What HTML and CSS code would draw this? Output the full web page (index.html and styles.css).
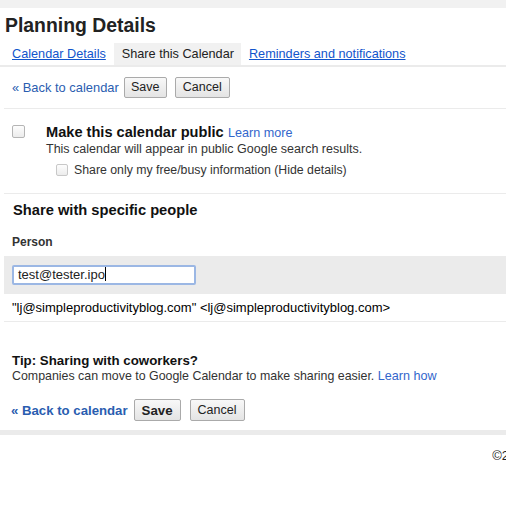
FILE: index.html
```html
<!DOCTYPE html>
<html>
<head>
<meta charset="utf-8">
<link rel="stylesheet" href="styles.css">
</head>
<body>
<div class="topbar"></div>
<h1 class="title">Planning Details</h1>
<div class="tabs">
  <a class="tab link" href="#">Calendar Details</a>
  <span class="tab active">Share this Calendar</span>
  <a class="tab link" href="#">Reminders and notifications</a>
</div>
<div class="actions top">
  <a class="back" href="#">« Back to calendar</a>
  <button class="btn save">Save</button>
  <button class="btn cancel">Cancel</button>
</div>
<div class="section public">
  <div class="pubrow">
    <span class="cb big"></span>
    <div class="pubtext">
      <div><span class="pubtitle">Make this calendar public</span> <a class="blue" href="#">Learn more</a></div>
      <div class="desc">This calendar will appear in public Google search results.</div>
      <div class="subopt"><span class="cb small"></span><span class="subtxt">Share only my free/busy information (Hide details)</span></div>
    </div>
  </div>
</div>
<div class="section people">
  <h2 class="h2">Share with specific people</h2>
  <div class="person-label">Person</div>
</div>
<div class="inputband">
  <div class="input">test@tester.ipo<span class="caret"></span></div>
</div>
<div class="emailrow">"lj@simpleproductivityblog.com" &lt;lj@simpleproductivityblog.com&gt;</div>
<div class="tip">
  <div class="tiptitle">Tip: Sharing with coworkers?</div>
  <div class="tiptext">Companies can move to Google Calendar to make sharing easier. <a class="blue" href="#">Learn how</a></div>
</div>
<div class="actions bottom">
  <a class="back big" href="#">« Back to calendar</a>
  <button class="btn save">Save</button>
  <button class="btn cancel">Cancel</button>
</div>
<div class="footbar"></div>
<div class="footer">©2</div>
</body>
</html>
```
FILE: styles.css
```css
html, body { margin: 0; padding: 0; background: #fff; }
body { font-family: "Liberation Sans", Arial, sans-serif; color: #222; width: 506px; overflow: hidden; }
.topbar { height: 8px; background: #f1f1f1; }
.title { font-size: 19.4px; font-weight: bold; margin: 0; padding: 6px 0 0 5px; height: 29px; line-height: 22px; color: #222; }
.tabs { display: flex; align-items: stretch; padding-left: 4px; height: 22px; border-bottom: 2px solid #ebebeb; }
.tab { font-size: 12.7px; line-height: 22px; padding: 0 8px; white-space: nowrap; }
.link { color: #1155cc; text-decoration: underline; }
.tab.active { background: #f1f1f1; color: #222; padding: 0 7px 0 8px; }
.actions { display: flex; align-items: center; white-space: nowrap; }
.actions.top { height: 41px; border-bottom: 1px solid #ebebeb; margin-left: 4px; padding-left: 8px; }
.back { color: #2a5db0; text-decoration: none; font-size: 12.9px; margin-right: 5px; }
.btn { box-sizing: border-box; font-family: "Liberation Sans", Arial, sans-serif; font-size: 12.5px; color: #222; height: 21px; padding: 0; margin: 0 8px 0 0; border: 1px solid #aaa; border-radius: 2px; background: linear-gradient(#f8f8f8, #e4e4e4); line-height: 19px; text-align: center; }
.btn.save { width: 43px; }
.btn.cancel { width: 55px; }
.section { margin-left: 4px; }
.public { border-bottom: 1px solid #ebebeb; padding: 14px 0 16px 8px; }
.pubrow { display: flex; }
.cb { display: inline-block; box-sizing: border-box; border: 1px solid #b5b5b5; border-radius: 2px; background: linear-gradient(#fdfdfd, #ececec); flex: none; }
.cb.big { width: 13px; height: 13px; margin-top: 2px; margin-right: 21px; }
.cb.small { width: 12px; height: 12px; border-color: #c8c8c8; margin-right: 6px; }
.pubtitle { font-size: 14.6px; font-weight: bold; color: #111; }
.blue { color: #3366cc; text-decoration: none; font-size: 12.6px; }
.desc { font-size: 12.5px; color: #333; margin-top: 0; line-height: 16px; }
.subopt { display: flex; align-items: center; margin: 6px 0 0 10px; font-size: 12.3px; color: #333; }
.people { padding: 7px 0 0 9px; }
.h2 { font-size: 14.7px; font-weight: bold; margin: 0; color: #111; line-height: 18px; }
.person-label { font-size: 12px; font-weight: bold; color: #333; margin: 16px 0 0 -1px; line-height: 14px; padding-bottom: 7px; }
.inputband { background: #ebebeb; margin-left: 4px; padding: 9px 0 9px 8px; }
.input { box-sizing: border-box; width: 184px; height: 20px; border: 2px solid #9bb7e4; border-radius: 2px; background: #fff; font-size: 13px; line-height: 16px; padding-left: 4px; color: #222; }
.caret { display: inline-block; width: 1px; height: 14px; background: #000; vertical-align: -2px; }
.emailrow { margin-left: 4px; padding: 7px 0 6px 8px; font-size: 13px; color: #000; border-bottom: 1px solid #ebebeb; white-space: nowrap; line-height: 14px; }
.tip { padding: 31px 0 0 12px; }
.tiptitle { font-size: 13.3px; font-weight: bold; color: #111; line-height: 16px; }
.tiptext { font-size: 12.4px; color: #333; line-height: 15px; }
.actions.bottom { padding-left: 11px; height: 22px; margin-top: 15px; }
.back.big { font-size: 13.2px; font-weight: bold; margin-right: 6px; }
.bottom .btn { height: 22px; }
.bottom .btn.save { width: 47px; font-weight: bold; font-size: 13.3px; margin-right: 9px; }
.footbar { height: 5px; background: #ebebeb; margin-top: 9px; }
.footer { text-align: right; font-size: 13px; color: #222; padding-top: 13px; margin-right: -3px; white-space: nowrap; }
```
